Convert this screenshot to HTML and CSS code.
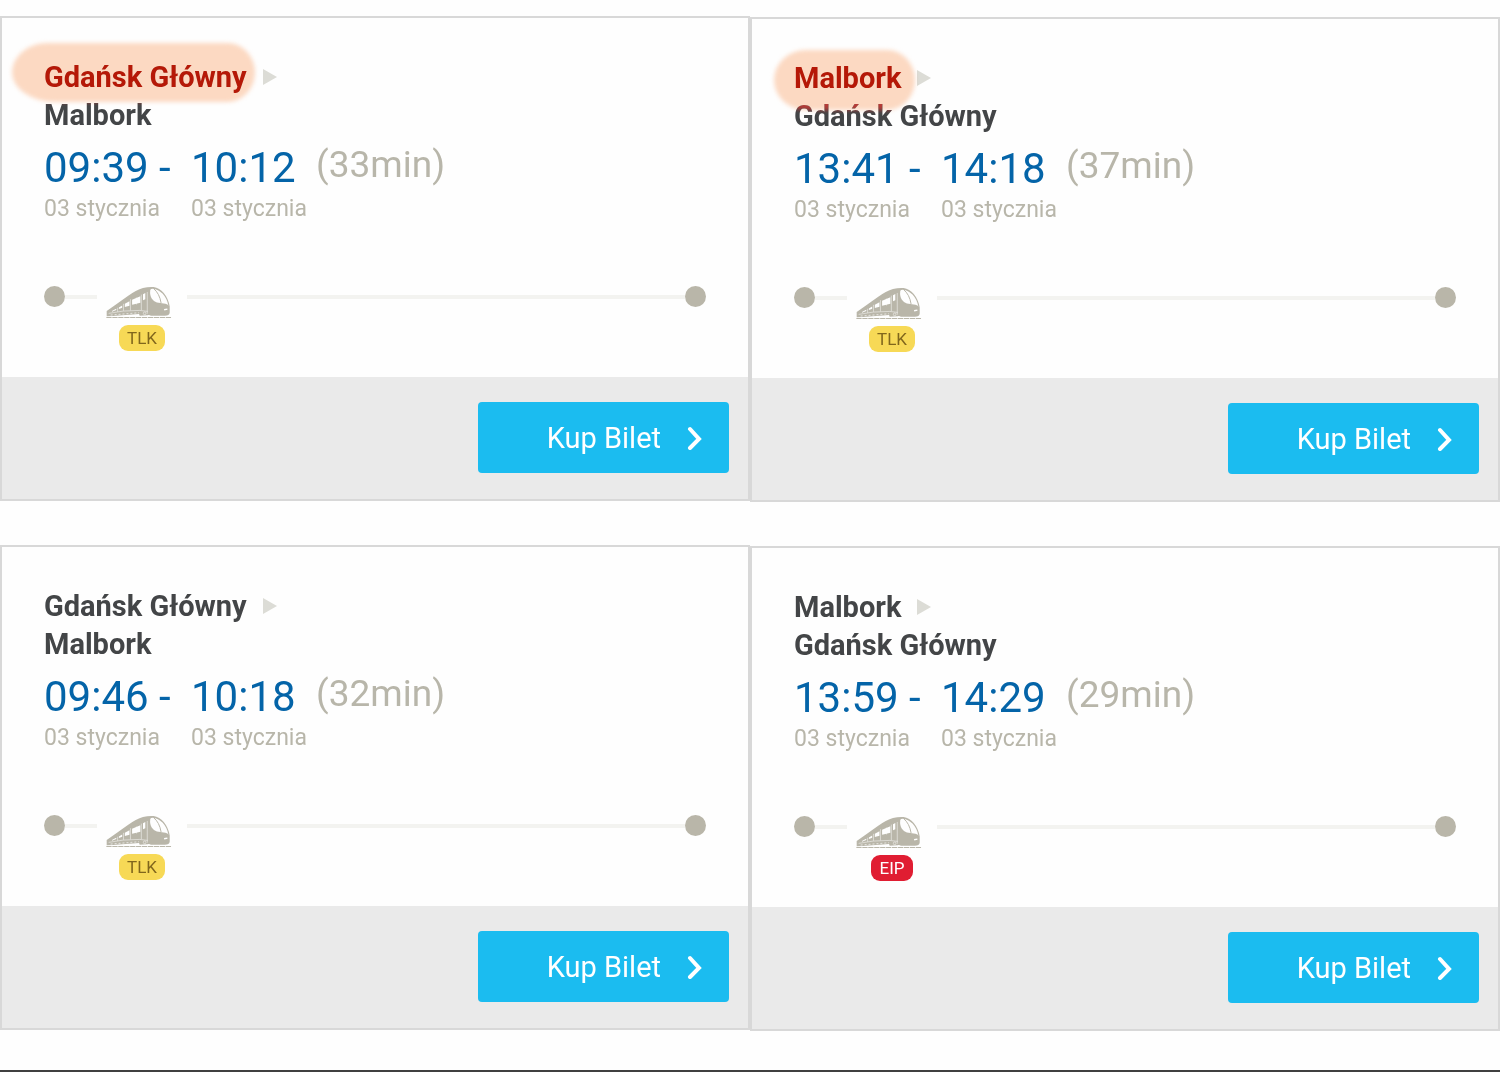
FILE: index.html
```
<!DOCTYPE html>
<html lang="pl">
<head>
    <meta charset="UTF-8">
    <meta name="viewport" content="width=device-width, initial-scale=1.0">
    <title>Połączenia</title>
    <link rel="stylesheet" href="styles.css">
</head>
<body>
    <!-- shared icons -->
    <svg class="sprite" aria-hidden="true">
        <symbol id="train" viewBox="48 32 218 100">
            <path fill="#b9b6a9" fill-rule="evenodd" d="M50 117 L50 108 L78 88 L112 64 Q140 43 160 38 Q176 34 192 35 Q210 38 223 53 Q237 70 241 94 L241 112 Q240 122 226 122 L184 122 Q178 118 174 121 L150 122 L148 117 L120 119 L98 121 L70 123 L50 124 Z
                M160 57 L167 53 L167 72 L160 75 Z
                M127 74 L152 63 L152 83 L127 89 Z
                M105 86 L119 78 L119 92 L105 96 Z
                M87 97 L97 91 L97 98 L87 102 Z
                M66 108 L79 101 L79 105 L66 110 Z
                M182 44 Q180 60 187 71 Q193 80 202 82 L228 86 Q236 88 237 92 Q233 70 219 55 Q206 41 190 40 Q183 40 182 44 Z"/>
            <path fill="none" stroke="#b9b6a9" stroke-width="3" d="M192 40 Q210 54 215 84"/>
            <path fill="none" stroke="#fff" stroke-width="1.500" d="M56 115 L100 108 L150 106 L174 109 M122 72 L122 106 M101 86 L101 107 M83 98 L83 110 M173 50 L173 116 M155 58 L155 105 M140 67 L140 88"/>
            <path stroke="#fff" stroke-width="4" d="M224 104 L234 102"/>
            <path stroke="#fff" stroke-width="2" stroke-dasharray="6 6" d="M62 120 L148 113"/>
            <circle cx="165" cy="115" r="4" fill="none" stroke="#fff" stroke-width="1.500"/>
            <path stroke="#b9b6a9" stroke-width="3" stroke-dasharray="16 2" d="M49 127.500 H245"/>
        </symbol>
        <symbol id="chevron" viewBox="0 0 16 24">
            <path fill="none" stroke="#fff" stroke-width="4" stroke-linecap="round" d="M3 3 L12 13 L3 22"/>
        </symbol>
        <symbol id="arrow" viewBox="0 0 14 16">
            <path fill="#dcdcd6" d="M0 0 L14 8 L0 16 Z"/>
        </symbol>
    </svg>

    <main class="results">
        <!-- outbound -->
        <section class="column">
            <article class="card">
                <div class="details">
                    <h2 class="route">
                        <span class="stop"><span class="marked marked-long">Gdańsk Główny</span><svg class="arrow"><use href="#arrow"/></svg></span>
                        <span class="stop">Malbork</span>
                    </h2>
                    <div class="times">
                        <div class="point"><span class="hour">09:39 -</span><span class="date">03 stycznia</span></div>
                        <div class="point"><span class="hour">10:12</span><span class="date">03 stycznia</span></div>
                        <span class="duration">(33min)</span>
                    </div>
                    <div class="track">
                        <span class="dot"></span><span class="rail rail-short"></span>
                        <div class="vehicle"><svg class="train"><use href="#train"/></svg><span class="badge tlk">TLK</span></div>
                        <span class="rail"></span><span class="dot"></span>
                    </div>
                </div>
                <div class="actions">
                    <button class="buy" type="button">Kup Bilet<svg class="chevron"><use href="#chevron"/></svg></button>
                </div>
            </article>

            <article class="card">
                <div class="details">
                    <h2 class="route">
                        <span class="stop">Gdańsk Główny<svg class="arrow"><use href="#arrow"/></svg></span>
                        <span class="stop">Malbork</span>
                    </h2>
                    <div class="times">
                        <div class="point"><span class="hour">09:46 -</span><span class="date">03 stycznia</span></div>
                        <div class="point"><span class="hour">10:18</span><span class="date">03 stycznia</span></div>
                        <span class="duration">(32min)</span>
                    </div>
                    <div class="track">
                        <span class="dot"></span><span class="rail rail-short"></span>
                        <div class="vehicle"><svg class="train"><use href="#train"/></svg><span class="badge tlk">TLK</span></div>
                        <span class="rail"></span><span class="dot"></span>
                    </div>
                </div>
                <div class="actions">
                    <button class="buy" type="button">Kup Bilet<svg class="chevron"><use href="#chevron"/></svg></button>
                </div>
            </article>
        </section>

        <!-- return -->
        <section class="column column-return">
            <article class="card">
                <div class="details">
                    <h2 class="route">
                        <span class="stop"><span class="marked marked-short">Malbork</span><svg class="arrow"><use href="#arrow"/></svg></span>
                        <span class="stop">Gdańsk Główny</span>
                    </h2>
                    <div class="times">
                        <div class="point"><span class="hour">13:41 -</span><span class="date">03 stycznia</span></div>
                        <div class="point"><span class="hour">14:18</span><span class="date">03 stycznia</span></div>
                        <span class="duration">(37min)</span>
                    </div>
                    <div class="track">
                        <span class="dot"></span><span class="rail rail-short"></span>
                        <div class="vehicle"><svg class="train"><use href="#train"/></svg><span class="badge tlk">TLK</span></div>
                        <span class="rail"></span><span class="dot"></span>
                    </div>
                </div>
                <div class="actions">
                    <button class="buy" type="button">Kup Bilet<svg class="chevron"><use href="#chevron"/></svg></button>
                </div>
            </article>

            <article class="card">
                <div class="details">
                    <h2 class="route">
                        <span class="stop">Malbork<svg class="arrow"><use href="#arrow"/></svg></span>
                        <span class="stop">Gdańsk Główny</span>
                    </h2>
                    <div class="times">
                        <div class="point"><span class="hour">13:59 -</span><span class="date">03 stycznia</span></div>
                        <div class="point"><span class="hour">14:29</span><span class="date">03 stycznia</span></div>
                        <span class="duration">(29min)</span>
                    </div>
                    <div class="track">
                        <span class="dot"></span><span class="rail rail-short"></span>
                        <div class="vehicle"><svg class="train"><use href="#train"/></svg><span class="badge eip">EIP</span></div>
                        <span class="rail"></span><span class="dot"></span>
                    </div>
                </div>
                <div class="actions">
                    <button class="buy" type="button">Kup Bilet<svg class="chevron"><use href="#chevron"/></svg></button>
                </div>
            </article>
        </section>
    </main>
</body>
</html>
```
FILE: styles.css
```
*{
    box-sizing: border-box;
}
body{
    margin: 0;
    min-height: 100vh;
    background-color: #fefefe;
    border-bottom: 2px solid #404040;
    font-family: Roboto, "Liberation Sans", sans-serif;
}
.sprite{
    position: absolute;
    width: 0;
    height: 0;
}
.results{
    display: grid;
    grid-template-columns: 1fr 1fr;
    padding-top: 16px;
}
.column{
    display: flex;
    flex-direction: column;
    gap: 44px;
}
/* the return column starts a hair lower */
.column-return{
    padding-top: 1px;
}
.card{
    border: 2px solid #d8d8d8;
    background-color: #fefefe;
}
.details{
    padding: 40px 42px 26px;
}

/* stations */
.route{
    margin: 0;
    font-size: 29px;
    line-height: 38px;
    font-weight: 700;
    color: #434547;
}
.stop{
    display: flex;
    align-items: center;
}
.arrow{
    width: 14px;
    height: 16px;
    margin-left: 16px;
}
.marked{
    position: relative;
    color: #ab1c08;
}
/* highlighter: lighten turns the dark text red, multiply tints the paper */
.marked::before,
.marked::after{
    content: "";
    position: absolute;
    filter: blur(2px);
}
.marked::before{
    background-color: #b80000;
    mix-blend-mode: lighten;
}
.marked::after{
    background-color: #fddac3;
    mix-blend-mode: multiply;
}
.marked-long::before,
.marked-long::after{
    inset: -15px -8px -6px -32px;
    border-radius: 36px 28px 28px 44px / 30px;
}
.marked-short::before,
.marked-short::after{
    inset: -9px -14px -13px -20px;
    border-radius: 32px 28px 28px 32px / 30px;
}

/* hours */
.times{
    display: flex;
    padding-top: 10px;
}
.point{
    width: 147px;
}
.hour{
    display: block;
    font-size: 42px;
    line-height: 48px;
    color: #0464a8;
}
.date{
    display: block;
    font-size: 23px;
    line-height: 34px;
    color: #b8b6aa;
}
.duration{
    margin-left: -22px;
    font-size: 37px;
    line-height: 42px;
    color: #b8b6aa;
}

/* journey line */
.track{
    display: flex;
    align-items: flex-start;
    padding-top: 60px;
}
.dot{
    width: 21px;
    height: 21px;
    border-radius: 50%;
    background-color: #b9b6a9;
}
.rail{
    flex: 1;
    height: 4px;
    margin-top: 9px;
    background-color: #f3f3f0;
}
.rail-short{
    flex: 0 0 32px;
}
.vehicle{
    display: flex;
    flex-direction: column;
    align-items: center;
    gap: 6px;
    width: 90px;
}
.train{
    width: 72px;
    height: 33px;
}
.badge{
    padding: 0 8px;
    border-radius: 9px;
    font-size: 17px;
    line-height: 26px;
}
.tlk{
    background-color: #f7d956;
    color: #80661c;
}
.eip{
    background-color: #e01d32;
    color: #fff;
}

/* footer */
.actions{
    display: flex;
    justify-content: flex-end;
    padding: 25px 19px 26px;
    background-color: #eaeaea;
}
.buy{
    display: flex;
    align-items: center;
    justify-content: flex-end;
    gap: 26px;
    width: 251px;
    height: 71px;
    padding: 0 26px;
    border: 0;
    border-radius: 4px;
    background-color: #1bbcf0;
    color: #fff;
    font-family: inherit;
    font-size: 29px;
    cursor: pointer;
}
.chevron{
    width: 16px;
    height: 24px;
}
```
